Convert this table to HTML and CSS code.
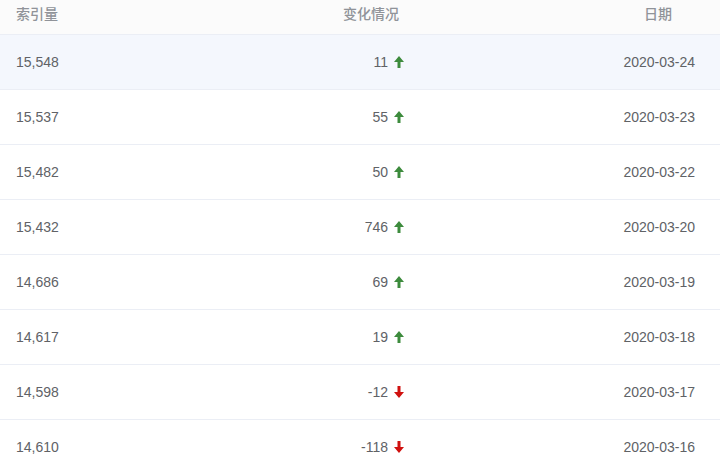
FILE: index.html
```html
<!DOCTYPE html>
<html lang="zh">
<head>
<meta charset="utf-8">
<link rel="stylesheet" href="styles.css">
</head>
<body>
<div class="table">
  <div class="row head">
    <div class="c1">索引量</div>
    <div class="c2">变化情况</div>
    <div class="c3">日期</div>
  </div>
  <div class="row hover">
    <div class="c1">15,548</div>
    <div class="c2">11<svg class="arrow up" viewBox="0 0 10 12"><path d="M5 0L10 6H6.5V12H3.5V6H0Z"/></svg></div>
    <div class="c3">2020-03-24</div>
  </div>
  <div class="row">
    <div class="c1">15,537</div>
    <div class="c2">55<svg class="arrow up" viewBox="0 0 10 12"><path d="M5 0L10 6H6.5V12H3.5V6H0Z"/></svg></div>
    <div class="c3">2020-03-23</div>
  </div>
  <div class="row">
    <div class="c1">15,482</div>
    <div class="c2">50<svg class="arrow up" viewBox="0 0 10 12"><path d="M5 0L10 6H6.5V12H3.5V6H0Z"/></svg></div>
    <div class="c3">2020-03-22</div>
  </div>
  <div class="row">
    <div class="c1">15,432</div>
    <div class="c2">746<svg class="arrow up" viewBox="0 0 10 12"><path d="M5 0L10 6H6.5V12H3.5V6H0Z"/></svg></div>
    <div class="c3">2020-03-20</div>
  </div>
  <div class="row">
    <div class="c1">14,686</div>
    <div class="c2">69<svg class="arrow up" viewBox="0 0 10 12"><path d="M5 0L10 6H6.5V12H3.5V6H0Z"/></svg></div>
    <div class="c3">2020-03-19</div>
  </div>
  <div class="row">
    <div class="c1">14,617</div>
    <div class="c2">19<svg class="arrow up" viewBox="0 0 10 12"><path d="M5 0L10 6H6.5V12H3.5V6H0Z"/></svg></div>
    <div class="c3">2020-03-18</div>
  </div>
  <div class="row">
    <div class="c1">14,598</div>
    <div class="c2">-12<svg class="arrow down" viewBox="0 0 10 12"><path d="M5 12L10 6H6.5V0H3.5V6H0Z"/></svg></div>
    <div class="c3">2020-03-17</div>
  </div>
  <div class="row">
    <div class="c1">14,610</div>
    <div class="c2">-118<svg class="arrow down" viewBox="0 0 10 12"><path d="M5 12L10 6H6.5V0H3.5V6H0Z"/></svg></div>
    <div class="c3">2020-03-16</div>
  </div>
</div>
</body>
</html>
```
FILE: styles.css
```css
html, body {
  margin: 0;
  padding: 0;
  background: #fff;
}
body {
  font-family: "Liberation Sans", Arial, "Noto Sans CJK SC", sans-serif;
  font-size: 14px;
  color: #606266;
  overflow: hidden;
}
.table {
  width: 720px;
}
.row {
  display: grid;
  grid-template-columns: 200px 204px 1fr;
  align-items: center;
  height: 54px;
  border-bottom: 1px solid #ebeef5;
}
.row.head {
  height: 26px;
  padding-bottom: 8px;
  background: #fbfbfb;
  color: #909399;
  font-weight: 500;
  font-family: "Noto Sans CJK SC", "Liberation Sans", sans-serif;
  font-size: 14px;
}
.row.hover {
  background: #f4f7fd;
}
.c1 {
  padding-left: 16px;
}
.c2 {
  display: flex;
  justify-content: flex-end;
  align-items: center;
}
.head .c2 {
  padding-right: 5px;
}
.c3 {
  text-align: right;
  padding-right: 25px;
}
.head .c3 {
  padding-right: 48px;
}
.arrow {
  width: 10px;
  height: 12px;
  margin-left: 6px;
  margin-top: -1px;
}
.arrow.up { fill: #3d8b3d; }
.arrow.down { fill: #d0110f; }
```
